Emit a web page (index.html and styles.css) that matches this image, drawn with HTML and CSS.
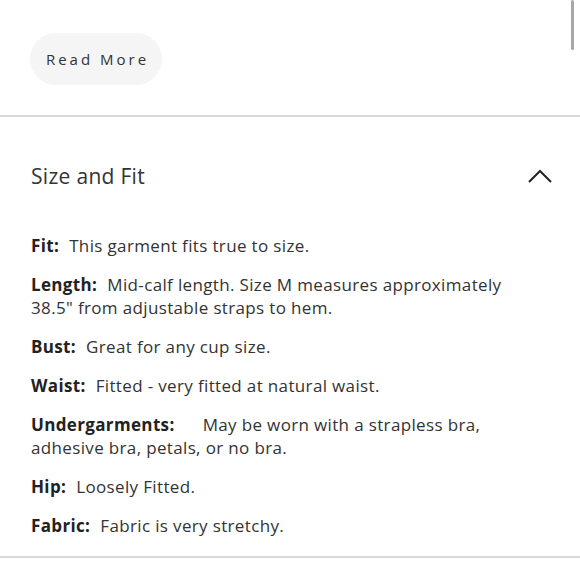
FILE: index.html
```html
<!DOCTYPE html>
<html>
<head>
<meta charset="utf-8">
<link rel="stylesheet" href="styles.css">
</head>
<body>
<div class="scrollbar"></div>
<section class="more">
  <button class="read-more">Read More</button>
</section>
<section class="accordion">
  <div class="acc-head">
    <h2 class="acc-title">Size and Fit</h2>
    <svg class="chevron" width="24" height="14" viewBox="0 0 24 14"><polyline points="1,13 12,2 23,13" fill="none" stroke="#222" stroke-width="2"/></svg>
  </div>
  <div class="acc-body">
    <p><b class="label">Fit:</b>This garment fits true to size.</p>
    <p><b class="label">Length:</b>Mid-calf length. Size M measures approximately 38.5" from adjustable straps to hem.</p>
    <p><b class="label">Bust:</b>Great for any cup size.</p>
    <p><b class="label">Waist:</b>Fitted - very fitted at natural waist.</p>
    <p><b class="label wide">Undergarments:</b>May be worn with a strapless bra, adhesive bra, petals, or no bra.</p>
    <p><b class="label">Hip:</b>Loosely Fitted.</p>
    <p><b class="label">Fabric:</b>Fabric is very stretchy.</p>
  </div>
</section>
</body>
</html>
```
FILE: styles.css
```css
html, body {
  margin: 0;
  padding: 0;
  background: #fff;
}
body {
  font-family: "Open Sans", "Liberation Sans", sans-serif;
  color: #333;
  position: relative;
  width: 580px;
  overflow: hidden;
}
.scrollbar {
  position: absolute;
  top: 0;
  right: 6px;
  width: 3px;
  height: 50px;
  border-radius: 2px;
  background: #a8a8a8;
}
.more {
  padding: 33px 0 30px 30px;
  border-bottom: 2px solid #d8d8d8;
}
.read-more {
  height: 52px;
  width: 132px;
  border: none;
  border-radius: 26px;
  background: #f5f5f5;
  font-family: inherit;
  font-size: 15px;
  letter-spacing: 3px;
  color: #333;
  padding: 0 0 0 3px;
}
.accordion {
  border-bottom: 2px solid #d8d8d8;
  padding: 0 0 19px 31px;
}
.acc-head {
  display: flex;
  align-items: center;
  justify-content: space-between;
  padding: 47px 28px 0 0;
}
.acc-title {
  margin: 0;
  font-size: 21px;
  line-height: 24px;
  font-weight: 500;
  letter-spacing: 0.3px;
  color: #333;
}
.chevron {
  display: block;
}
.acc-body {
  padding-top: 46px;
  padding-right: 45px;
  display: flex;
  flex-direction: column;
  gap: 16px;
}
.acc-body p {
  margin: 0;
  font-size: 17px;
  line-height: 23px;
  letter-spacing: 0.35px;
  color: #333;
}
.label {
  font-weight: 700;
  color: #222;
  margin-right: 10px;
}
.label.wide {
  margin-right: 28px;
}
```
